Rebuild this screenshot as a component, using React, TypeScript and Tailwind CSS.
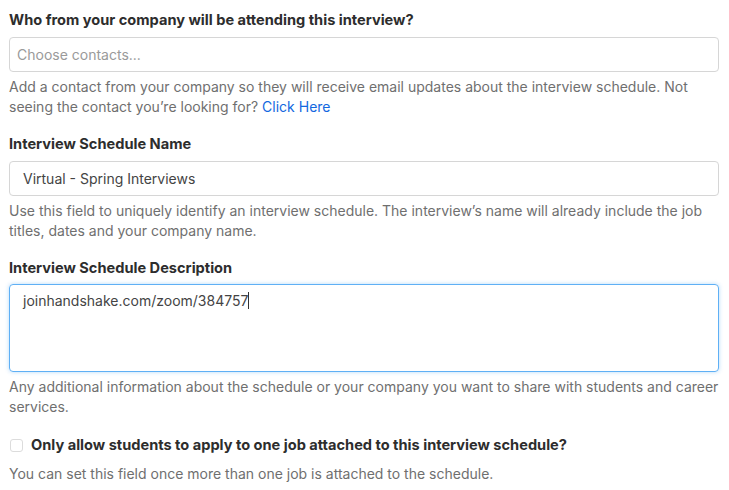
import React from "react";

const Label = ({ children }: { children: React.ReactNode }) => (
  <h3 className="text-[14.6px] font-bold leading-[20px] text-[#2d2d2d]">{children}</h3>
);

const Help = ({ children }: { children: React.ReactNode }) => (
  <p className="text-[14px] leading-[20px] text-[#6f6f6f]">{children}</p>
);

export default function App() {
  return (
    <div
      className="h-[490px] w-[729px] overflow-hidden bg-white pl-[9px] pr-[10px] pt-[10px]"
      style={{ fontFamily: "Inter, 'Liberation Sans', sans-serif" }}
    >
      <Label>Who from your company will be attending this interview?</Label>
      <div className="mt-[7px] flex h-[35px] items-center rounded-[4px] border border-[#d6d6d6] px-[7px] text-[14px] text-[#9a9a9a]">
        Choose contacts...
      </div>
      <div className="mt-[5px]">
        <Help>
          Add a contact from your company so they will receive email updates about the interview schedule. Not
          seeing the contact you’re looking for? <a className="text-[#1268e0]">Click Here</a>
        </Help>
      </div>

      <div className="mt-[17px]">
        <Label>Interview Schedule Name</Label>
      </div>
      <div className="mt-[7px] flex h-[35px] items-center rounded-[4px] border border-[#d6d6d6] px-[13px] text-[14px] text-[#444]">
        Virtual - Spring Interviews
      </div>
      <div className="mt-[5px]">
        <Help>
          Use this field to uniquely identify an interview schedule. The interview’s name will already include the job
          titles, dates and your company name.
        </Help>
      </div>

      <div className="mt-[17px]">
        <Label>Interview Schedule Description</Label>
      </div>
      <div className="mt-[6px] h-[88px] rounded-[4px] border border-[#5fb0f5] px-[13px] pt-[4px] text-[14px] leading-[20px] text-[#444] shadow-[0_0_4px_rgba(95,176,245,0.45)]">
        joinhandshake.com/zoom/384757<span className="inline-block h-[17px] w-px translate-y-[3px] bg-[#333]" />
      </div>
      <div className="mt-[5px]">
        <Help>
          Any additional information about the schedule or your company you want to share with students and career
          services.
        </Help>
      </div>

      <div className="mt-[18px] flex items-center gap-[8px] pl-px">
        <span className="h-[13px] w-[13px] shrink-0 rounded-[3px] border border-[#dcdcdc] bg-white" />
        <span className="text-[14.6px] font-bold leading-[20px] text-[#2d2d2d]">
          Only allow students to apply to one job attached to this interview schedule?
        </span>
      </div>
      <div className="mt-[9px]">
        <Help>You can set this field once more than one job is attached to the schedule.</Help>
      </div>
    </div>
  );
}
